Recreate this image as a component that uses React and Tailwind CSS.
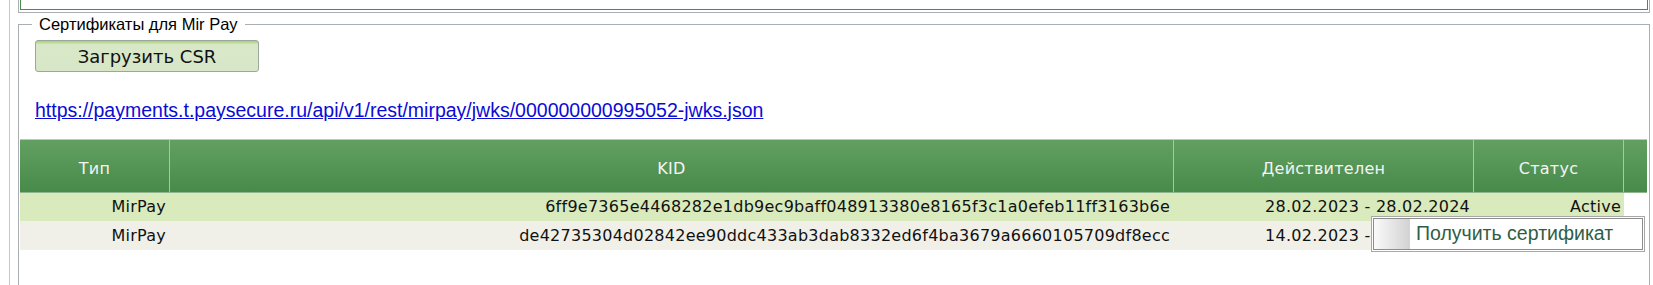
import React from "react";

const rows = [
    { type: "MirPay", kid: "6ff9e7365e4468282e1db9ec9baff048913380e8165f3c1a0efeb11ff3163b6e", valid: "28.02.2023 - 28.02.2024", status: "Active", bg: "bg-[#d9eabc]", h: "h-[28px]" },
    { type: "MirPay", kid: "de42735304d02842ee90ddc433ab3dab8332ed6f4ba3679a6660105709df8ecc", valid: "14.02.2023 - 14.02.2024", status: "Active", bg: "bg-[#f0f0e8]", h: "h-[29px]" },
];

function App() {
    return (
        <div className="relative w-[1653px] h-[285px] bg-white overflow-hidden">
            <div className="ml-[9px] h-full border-l border-[#c8c8c8] pl-[8px]">
                {/* верхний блок (обрезан) */}
                <div className="w-[1632px] h-[13px] border-x border-b border-[#a9aeb3] px-[1px]">
                    <div className="h-[10px] border-x border-b border-[#4a8a4c]"></div>
                </div>

                <fieldset className="mt-[2px] w-[1632px] h-[300px] border border-[#a9aeb3] px-[1px]">
                    <legend className="ml-[12px] px-[7px] text-[16.5px] leading-[18px] text-black font-['Liberation_Sans',Arial,sans-serif]">
                        Сертификаты для Mir Pay
                    </legend>

                    <button className="mt-[7px] ml-[15px] w-[224px] h-[32px] rounded-[3px] border border-[#9aa79a] bg-gradient-to-b from-[#a8d070] via-[#d8e8c8] via-[12%] to-[#d6e6c6] text-[18px] text-[#111] font-['DejaVu_Sans',Verdana,sans-serif]">
                        Загрузить CSR
                    </button>

                    <div className="mt-[29px] ml-[15px] h-[19px] text-[19.5px] leading-[19px] font-['Liberation_Sans',Arial,sans-serif]">
                        <a href="#" className="text-[#0b0bd6] underline">https://payments.t.paysecure.ru/api/v1/rest/mirpay/jwks/000000000995052-jwks.json</a>
                    </div>

                    <div className="mt-[19px] w-[1627px] border-t border-[#c4c4c4] font-['DejaVu_Sans',Verdana,sans-serif] text-[16px] tracking-[0.25px]">
                        <div className="flex h-[53px] bg-gradient-to-b from-[#62a062] to-[#478a49] text-[#f4f4f4] border-b border-[#8fb58f]">
                            <div className="w-[150px] flex items-center justify-center pt-[5px] border-r border-[#a5c8a5]">Тип</div>
                            <div className="w-[1004px] flex items-center justify-center pt-[5px] border-r border-[#a5c8a5]">KID</div>
                            <div className="w-[300px] flex items-center justify-center pt-[5px] border-r border-[#a5c8a5]">Действителен</div>
                            <div className="w-[150px] flex items-center justify-center pt-[5px] border-r border-[#a5c8a5]">Статус</div>
                            <div className="w-[23px]"></div>
                        </div>
                        {rows.map((r, i) => (
                            <div key={i} className={`flex w-[1604px] ${r.h} ${r.bg} text-[#111]`}>
                                <div className="w-[150px] flex items-center justify-end pr-[4px]">{r.type}</div>
                                <div className="w-[1004px] flex items-center justify-end pr-[4px]">{r.kid}</div>
                                <div className="w-[300px] flex items-center justify-end pr-[4px]">{r.valid}</div>
                                <div className="w-[150px] flex items-center justify-end pr-[3px]">{r.status}</div>
                            </div>
                        ))}
                    </div>
                </fieldset>
            </div>

            {/* контекстное меню */}
            <div className="absolute left-[1371px] top-[216px] w-[274px] h-[36px] border border-[#a8a8a8] bg-white p-[1px]">
                <div className="flex h-full border border-[#8c8c8c] bg-white">
                    <div className="w-[36px] h-full bg-gradient-to-r from-[#fafafa] to-[#d2d2d2]"></div>
                    <div className="pl-[6px] flex items-center text-[19.5px] text-[#2e5e46] font-['Liberation_Sans',Arial,sans-serif]">
                        Получить сертификат
                    </div>
                </div>
            </div>
        </div>
    );
}

export default App;
